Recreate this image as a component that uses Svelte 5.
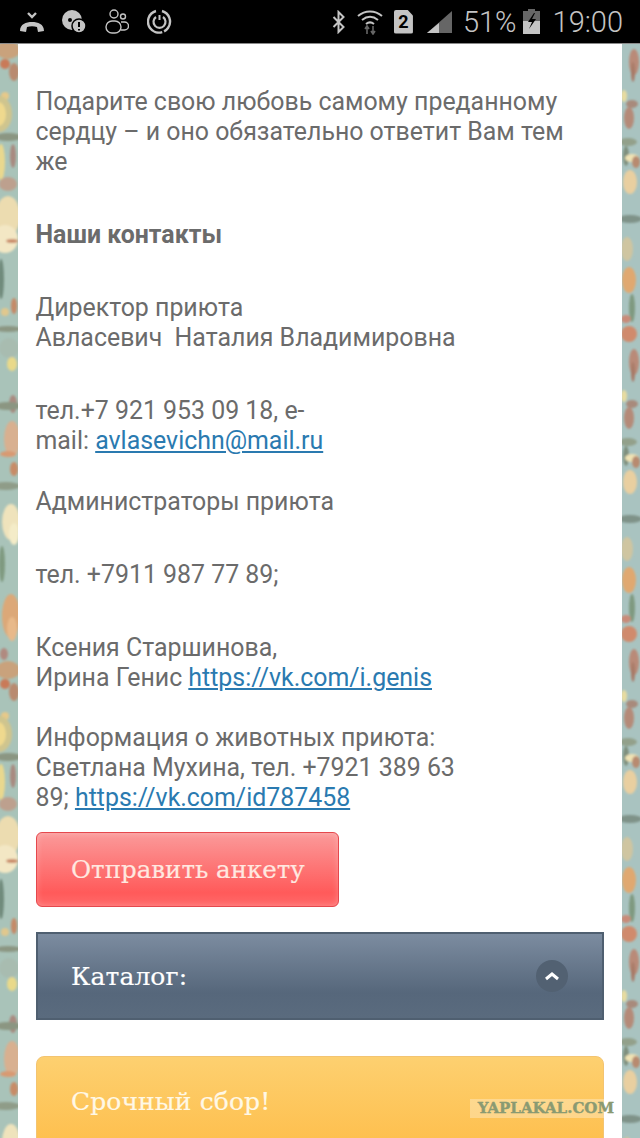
<script>
  const blobs = [
    ['#c9a27c', 8, 6, 12, 9], ['#c97a58', 5, 20, 5, 5], ['#b98a70', 14, 28, 5, 9],
    ['#e6c98a', 5, 52, 4, 4], ['#cfc58e', -1, 70, 13, 18], ['#efd98e', -2, 70, 8, 12],
    ['#8b9682', 8, 93, 14, 4], ['#e9d88e', 1, 118, 4, 18], ['#a88a80', 13, 112, 3, 12],
    ['#bda08e', 8, 140, 9, 7], ['#ecdcb0', 8, 172, 12, 20], ['#f3e7c4', 5, 195, 13, 14],
    ['#c98a68', 12, 197, 6, 2], ['#6f8a7c', 1, 235, 3, 20], ['#e0c88e', 5, 268, 4, 4],
    ['#c48a68', 14, 262, 3, 8], ['#8b9682', 8, 285, 14, 3]
  ];
  const blobs2 = [
    ['#a8bcb0', 9, 304, 10, 10], ['#e9d98a', 12, 320, 5, 7], ['#a98a80', 13, 360, 4, 9],
    ['#8b9682', 8, 362, 14, 4], ['#d8b090', 12, 395, 8, 18], ['#d89a72', 8, 410, 8, 3],
    ['#c78c68', 14, 425, 4, 7], ['#8f9c88', 6, 442, 14, 4], ['#efe3bc', 11, 478, 9, 18],
    ['#f4ecc8', 14, 490, 5, 11], ['#7f9a80', 2, 520, 3, 18], ['#dca878', 11, 572, 9, 22],
    ['#e8b98a', 12, 585, 5, 12], ['#b08a80', 4, 610, 4, 6]
  ];
  const rightBlobs = [
    ['#b98a78', 12, 18, 5, 13], ['#a87a68', 11, 28, 2, 10], ['#e8dca0', 2, 52, 3, 6],
    ['#a88a7c', 10, 60, 6, 4], ['#b58a78', 7, 74, 5, 11], ['#93a08a', 6, 98, 9, 4],
    ['#7f8f7d', 4, 112, 3, 10], ['#efe2b4', 10, 114, 7, 4], ['#b88a70', 14, 118, 4, 6],
    ['#e9cfa0', 8, 138, 7, 12], ['#7f9288', 8, 175, 12, 4], ['#cfc5a0', 5, 205, 6, 12],
    ['#e0a870', 7, 236, 7, 13], ['#7f9a80', 10, 264, 3, 14], ['#c98a78', 4, 275, 5, 4],
    ['#d08a6c', 7, 290, 8, 8]
  ];
  const left = [];
  const right = [];
  for (let i = 0; i < 2; i++) {
    const off = i * 620;
    for (const b of [...blobs, ...blobs2]) left.push({ c: b[0], x: b[1], y: b[2] + off, rx: b[3], ry: b[4] });
  }
  for (let i = 0; i < 4; i++) {
    const off = i * 300;
    for (const b of rightBlobs) right.push({ c: b[0], x: b[1], y: b[2] + off, rx: b[3], ry: b[4] });
  }
</script>

<div class="screen">
  <header class="status">
    <div class="status-left">
      <svg class="ic" width="26" height="24" viewBox="0 0 26 24" style="margin-left:19px">
        <path d="M9 3l4 4 4-4" fill="none" stroke="#c4c4c4" stroke-width="2.4"/>
        <path d="M1 21c0-7 6-9 12-9s12 2 12 9l-6 1-1-5c-3-1-7-1-10 0l-1 5z" fill="#c4c4c4"/>
      </svg>
      <svg class="ic" width="24" height="24" viewBox="0 0 24 24" style="margin-left:17px">
        <circle cx="10" cy="10" r="10" fill="#c4c4c4"/>
        <circle cx="8" cy="10" r="2" fill="#000"/>
        <circle cx="17" cy="16" r="7" fill="#c4c4c4" stroke="#000" stroke-width="1.5"/>
        <path d="M17 12v5M17 19v1.5" stroke="#000" stroke-width="2"/>
      </svg>
      <svg class="ic" width="24" height="26" viewBox="0 0 24 26" style="margin-left:19px">
        <g fill="none" stroke="#c4c4c4" stroke-width="1.4">
          <circle cx="9" cy="5" r="4"/>
          <circle cx="18" cy="7.500" r="2.500"/>
          <rect x="1" y="12" width="15" height="12" rx="6"/>
          <path d="M16 13h3.500a3.500 3.500 0 0 1 0 8H16"/>
        </g>
      </svg>
      <svg class="ic" width="25" height="25" viewBox="0 0 25 25" style="margin-left:18px">
        <g fill="none" stroke="#c4c4c4">
          <path d="M15 2a11 11 0 1 1-6 0" stroke-width="2.400" stroke-dasharray="26 2 60"/>
          <path d="M16 8a6 6 0 1 1-7 0" stroke-width="2.200"/>
          <path d="M12.500 6v5" stroke-width="2"/>
        </g>
      </svg>
    </div>
    <div class="status-right">
      <svg class="ic" width="14" height="24" viewBox="0 0 14 24">
        <path d="M1.500 7l10 10-5 5V2l5 5-10 10" fill="none" stroke="#c4c4c4" stroke-width="2"/>
      </svg>
      <svg class="ic" width="26" height="26" viewBox="0 0 26 26" style="margin-left:11px">
        <g fill="none" stroke="#c4c4c4" stroke-width="2">
          <path d="M1 7c7-6 17-6 24 0"/>
          <path d="M5 11c5-4 11-4 16 0"/>
          <path d="M9 15c2.500-2 5.500-2 8 0"/>
        </g>
        <path d="M10 25v-6M8 20l2-3 2 3M16 17v6M14 22l2 3 2-3" fill="none" stroke="#666" stroke-width="1.600"/>
      </svg>
      <div class="sim">2</div>
      <svg class="ic" width="26" height="24" viewBox="0 0 26 24" style="margin-left:14px">
        <path d="M0 23l25-22v22z" fill="#666"/>
        <path d="M0 23l12-10v10z" fill="#c4c4c4"/>
      </svg>
      <span class="pct">51%</span>
      <svg class="ic" width="19" height="25" viewBox="0 0 19 25" style="margin-left:5px">
        <path d="M6 0h7v2h5v10H1V2h5z" fill="#666"/>
        <path d="M1 12h17v13H1z" fill="#c4c4c4"/>
        <path d="M12 4l-6 9h4l-3 7 7-10h-4l3-6z" fill="#000"/>
      </svg>
      <span class="time">19:00</span>
    </div>
  </header>

  <div class="page">
    <svg class="strip" width="18" height="1094" aria-hidden="true">
      <defs>
        <filter id="soft" x="-20%" y="-2%" width="140%" height="104%"><feGaussianBlur stdDeviation="1.2"/></filter>
      </defs>
      <rect width="18" height="1094" fill="#a9c3b9"/>
      <g filter="url(#soft)">
        {#each left as b}
          <ellipse cx={b.x} cy={b.y} rx={b.rx} ry={b.ry} fill={b.c}/>
        {/each}
      </g>
    </svg>

    <main class="panel">
      <div class="copy">
        <p>Подарите свою любовь самому преданному сердцу – и оно обязательно ответит Вам тем же</p>
        <p><strong>Наши контакты</strong></p>
        <p>Директор приюта<br />Авласевич&nbsp; Наталия Владимировна</p>
        <p class="tight">тел.+7 921 953 09 18, e-<br />mail: <a href="#a">avlasevichn@mail.ru</a></p>
        <p>Администраторы приюта</p>
        <p>тел. +7911 987 77 89;</p>
        <p class="tight">Ксения Старшинова,<br />Ирина Генис <a href="#b">https://vk.com/i.genis</a></p>
        <p class="last">Информация о животных приюта:<br />Светлана Мухина, тел. +7921 389 63<br />89; <a href="#c">https://vk.com/id787458</a></p>
      </div>

      <button class="cta">Отправить анкету</button>

      <div class="catalog">
        <span>Каталог:</span>
        <span class="toggle">
          <svg width="16" height="10" viewBox="0 0 16 10"><path d="M2 8l6-5 6 5" fill="none" stroke="#fff" stroke-width="3"/></svg>
        </span>
      </div>

      <div class="urgent">Срочный сбор!</div>
    </main>

    <svg class="strip" width="18" height="1094" aria-hidden="true">
      <rect width="18" height="1094" fill="#a9c3c0"/>
      <g filter="url(#soft)">
        {#each right as b}
          <ellipse cx={b.x} cy={b.y} rx={b.rx} ry={b.ry} fill={b.c}/>
        {/each}
      </g>
    </svg>
  </div>

  <div class="mark">YAPLAKAL.COM</div>
</div>

<style>
  :global(body) { margin: 0; background: #fff; }
  .screen {
    position: relative;
    width: 640px;
    height: 1138px;
    overflow: hidden;
    font-family: Roboto, "Liberation Sans", sans-serif;
  }
  .status {
    height: 43px;
    background: #000;
    border-bottom: 1px solid #8a8a8a;
    display: flex;
    justify-content: space-between;
    align-items: center;
    color: #c4c4c4;
  }
  .status-left, .status-right { display: flex; align-items: center; }
  .status-right { padding-right: 17px; }
  .ic { display: block; flex: none; }
  .sim {
    width: 19px;
    height: 24px;
    margin-left: 11px;
    background: #c4c4c4;
    color: #000;
    font: 700 18px/24px Roboto, sans-serif;
    text-align: center;
    clip-path: polygon(0 0, 70% 0, 100% 25%, 100% 100%, 0 100%);
    border-radius: 2px;
  }
  .pct { margin-left: 10px; font-size: 29px; font-weight: 300; line-height: 32px; }
  .time { margin-left: 12px; font-size: 29px; font-weight: 300; line-height: 32px; }
  .page { display: flex; height: 1094px; }
  .strip { display: block; flex: none; }
  .panel {
    flex: 1;
    background: #fff;
    padding: 43px 18px 0 17.500px;
    min-width: 0;
  }
  .copy { color: #6b6b6b; font-size: 24.900px; line-height: 30px; max-width: 550px; }
  .copy p { margin: 0 0 43px; }
  .copy p.tight { margin-bottom: 30px; }
  .copy p:nth-child(4) { margin-bottom: 31px; }
  .copy p.last { margin-bottom: 19px; }
  .copy a { color: #2a7ab0; text-decoration: underline; }
  .cta, .catalog, .urgent {
    font-family: "DejaVu Serif", serif;
    font-size: 25px;
    box-sizing: border-box;
    color: #fff;
    -webkit-text-stroke: .2px currentColor;
  }
  .cta {
    display: block;
    width: 303px;
    height: 75px;
    margin-left: .5px;
    padding: 0 0 0 34px;
    font-size: 24.500px;
    text-align: left;
    color: #ffe8e0;
    border: 1px solid #e5484d;
    border-radius: 6px;
    background: linear-gradient(#fb9a9a, #ff5a5a 82%, #ff6a6a);
    box-shadow: inset 0 0 6px rgba(255,255,255,.25);
  }
  .catalog {
    margin-top: 25px;
    margin-left: .5px;
    height: 88px;
    border: 2px solid #4f5f70;
    padding: 0 34px 0 33px;
    letter-spacing: .1px;
    display: flex;
    align-items: center;
    justify-content: space-between;
    background: linear-gradient(#7c8ca0, #56677b 70%, #5a6b7e);
  }
  .toggle {
    width: 32px;
    height: 32px;
    border-radius: 50%;
    background: #526172;
    display: flex;
    align-items: center;
    justify-content: center;
  }
  .urgent {
    margin-top: 36px;
    margin-left: .5px;
    height: 110px;
    padding: 28px 34px 0;
    letter-spacing: .1px;
    line-height: 34px;
    color: #fff8e6;
    border: 1px solid #f3c471;
    border-radius: 8px 8px 0 0;
    background: linear-gradient(#fdd070, #febb45);
  }
  .mark {
    position: absolute;
    left: 470px;
    top: 1099px;
    width: 144px;
    height: 19px;
    background: rgba(255,255,255,.3);
    color: #8a9a72;
    font: 700 15px/19px "DejaVu Serif", serif;
    -webkit-text-stroke: .4px #8a9a72;
    text-align: right;
    white-space: nowrap;
  }
</style>
